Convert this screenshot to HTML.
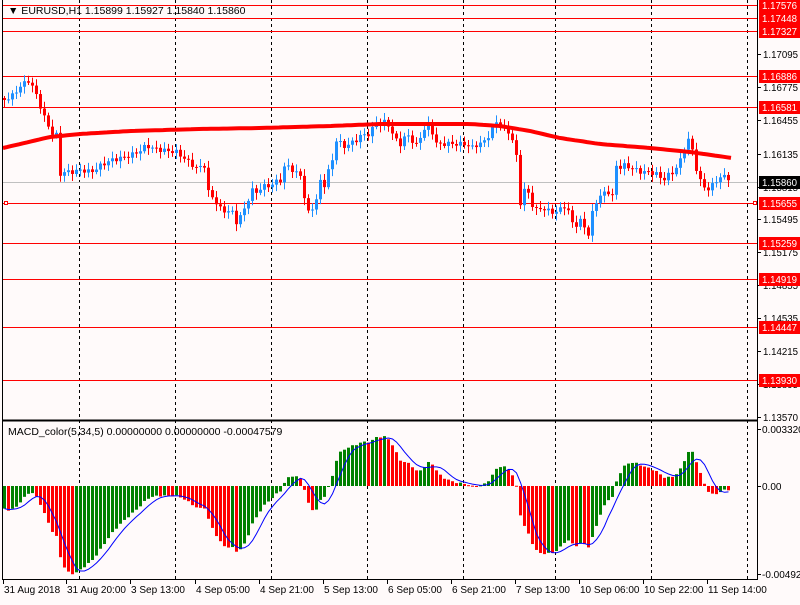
<!DOCTYPE html>
<html><head><meta charset="utf-8">
<style>
html,body{margin:0;padding:0;background:#fffafa;}
body{width:800px;height:600px;overflow:hidden;font-family:"Liberation Sans",Tahoma,sans-serif;}
svg text{font-family:"Liberation Sans",sans-serif;font-size:10px;}
</style></head>
<body>
<svg id="c" width="800" height="600" xmlns="http://www.w3.org/2000/svg">
<rect width="800" height="600" fill="#fffafa"/>
<g id="grid"></g>
<g id="lines"></g>
<g id="candles"></g>
<g id="macd"></g>
<g id="frame">
<line x1="2.5" y1="0" x2="2.5" y2="580" stroke="#000"/>
<line x1="757.5" y1="0" x2="757.5" y2="580" stroke="#000"/>
<line x1="2" y1="420.5" x2="758" y2="420.5" stroke="#000" stroke-width="2"/>
<line x1="2" y1="579.5" x2="758" y2="579.5" stroke="#000"/>
</g>
<g id="axis"></g>
<text x="8" y="14" style="font-size:10.5px" fill="#000">▼ EURUSD,H1  1.15899 1.15927 1.15840 1.15860</text>
<text x="8" y="435" style="font-size:10.5px" fill="#000">MACD_color(5,34,5) 0.00000000 0.00000000 -0.00047579</text>
</svg>
<script>
var NS="http://www.w3.org/2000/svg";
function el(p,t,a,txt){var e=document.createElementNS(NS,t);for(var k in a)e.setAttribute(k,a[k]);if(txt!==undefined)e.textContent=txt;document.getElementById(p).appendChild(e);return e;}
[79,175,271,367,463,555,651,747].forEach(function(x){el("grid","line",{x1:x+.5,y1:0,x2:x+.5,y2:580,stroke:"#000","stroke-dasharray":"3,3"});});
var rl=[[5,"1.17576"],[18,"1.17448"],[31,"1.17327"],[76,"1.16886"],[107,"1.16581"],[203,"1.15655"],[243,"1.15259"],[279,"1.14919"],[327,"1.14447"],[380,"1.13930"]];
el("lines","line",{x1:3,y1:182.5,x2:757,y2:182.5,stroke:"#c0c0c0"});
rl.forEach(function(r){el("lines","line",{x1:3,y1:r[0]+.5,x2:757,y2:r[0]+.5,stroke:"#ff0000"});});
el("lines","rect",{x:4.5,y:201.5,width:3,height:3,fill:"#fff",stroke:"#f00"});
el("lines","rect",{x:753.5,y:201.5,width:3,height:3,fill:"#fff",stroke:"#f00"});
var tk=[[54,"1.17095"],[87,"1.16775"],[120,"1.16455"],[154,"1.16135"],[187,"1.15815"],[219,"1.15495"],[252,"1.15175"],[285,"1.14855"],[318,"1.14535"],[351,"1.14215"],[384,"1.13895"],[417,"1.13570"]];
tk.forEach(function(t){el("axis","line",{x1:757,y1:t[0]+.5,x2:761,y2:t[0]+.5,stroke:"#000"});el("axis","text",{x:763,y:t[0]+4,fill:"#000",textLength:35,lengthAdjust:"spacingAndGlyphs"},t[1]);});
rl.forEach(function(r){el("axis","rect",{x:759,y:r[0]-6,width:41,height:13,fill:"#ff0000"});el("axis","text",{x:762,y:r[0]+4,fill:"#fff",textLength:35,lengthAdjust:"spacingAndGlyphs"},r[1]);});
el("axis","rect",{x:759,y:176,width:41,height:13,fill:"#000"});el("axis","text",{x:762,y:186,fill:"#fff",textLength:35,lengthAdjust:"spacingAndGlyphs"},"1.15860");
[[429,"0.003320"],[486,"0.00"],[574,"-0.004924"]].forEach(function(t){el("axis","line",{x1:757,y1:t[0]+.5,x2:761,y2:t[0]+.5,stroke:"#000"});el("axis","text",{x:762,y:t[0]+4,fill:"#000"},t[1]);});
var tl=[[3,"31 Aug 2018"],[66,"31 Aug 20:00"],[130,"3 Sep 13:00"],[195,"4 Sep 05:00"],[259,"4 Sep 21:00"],[323,"5 Sep 13:00"],[387,"6 Sep 05:00"],[451,"6 Sep 21:00"],[515,"7 Sep 13:00"],[579,"10 Sep 06:00"],[643,"10 Sep 22:00"],[707,"11 Sep 14:00"]];
tl.forEach(function(t){el("axis","line",{x1:t[0]+.5,y1:580,x2:t[0]+.5,y2:584,stroke:"#000"});el("axis","text",{x:t[0]+1,y:593,fill:"#000"},t[1]);});
var P=[[3,100],[12,95],[20,85],[28,80],[35,95],[42,115],[50,133],[55,135],[58,175],[62,172],[70,172],[80,170],[90,172],[100,165],[110,160],[120,158],[130,155],[140,150],[145,145],[150,148],[160,150],[175,152],[185,160],[195,168],[205,165],[207,192],[212,198],[218,208],[225,212],[230,210],[235,222],[240,215],[245,205],[250,190],[255,192],[260,188],[265,185],[270,186],[275,181],[280,180],[283,168],[288,165],[292,172],[296,174],[300,175],[304,205],[308,215],[312,205],[315,200],[318,178],[322,190],[325,175],[330,165],[335,140],[338,142],[342,147],[346,145],[350,143],[355,140],[360,135],[365,135],[370,133],[372,125],[375,122],[380,125],[385,120],[390,132],[395,140],[400,145],[405,133],[410,140],[415,145],[420,135],[425,125],[428,125],[432,135],[435,143],[440,145],[445,143],[450,144],[465,144],[470,148],[475,145],[480,143],[485,140],[490,130],[495,122],[500,125],[505,130],[510,135],[513,150],[516,160],[519,203],[522,190],[525,190],[528,195],[531,205],[535,210],[540,208],[550,212],[555,212],[560,208],[565,205],[568,215],[572,225],[575,225],[580,220],[588,237],[592,205],[596,200],[600,195],[604,192],[608,192],[612,198],[614,165],[618,168],[622,165],[630,168],[640,172],[648,172],[655,174],[662,180],[667,175],[672,172],[677,165],[681,155],[685,140],[689,140],[693,160],[697,178],[702,186],[708,190],[713,182],[718,178],[724,176],[730,180]];
function interp(A,x){for(var i=1;i<A.length;i++){if(x<=A[i][0]){var a=A[i-1],b=A[i];return a[1]+(b[1]-a[1])*(x-a[0])/(b[0]-a[0]);}}return A[A.length-1][1];}
var N=182,closes=[],xs=[];
var prev=98;
for(var i=0;i<N;i++){var x=3+4*i;xs.push(x);var c=interp(P,x)+Math.sin(i*2.3)*2.2;
 var o=prev;var hi=Math.min(o,c)-2-Math.abs(Math.sin(i*1.7))*5;var lo=Math.max(o,c)+2+Math.abs(Math.cos(i*1.3))*5;
 var up=c<o;var col=up?"#1e90ff":"#ff0000";
 el("candles","line",{x1:x+1.5,y1:hi,x2:x+1.5,y2:lo,stroke:col});
 var t=Math.min(o,c),h=Math.max(1,Math.abs(o-c));
 el("candles","rect",{x:x,y:t,width:3,height:h,fill:col});
 closes.push(c);prev=c;}
var MA=[[3,148],[50,137],[80,134],[130,131],[200,129],[260,128],[330,126],[380,124],[470,124],[500,126],[530,131],[560,138],[600,144],[650,148],[690,152],[732,158]];
var d="";for(var x=3;x<=732;x+=4){d+=(x==3?"M":"L")+x+","+interp(MA,x).toFixed(1);}
el("candles","path",{d:d,fill:"none",stroke:"#ff0000","stroke-width":4});
var pre=[];for(var k=0;k<60;k++)pre.push(k<45?70:70+(k-45)*1.5);
var all=pre.concat(closes);
var ef=all[0],es=all[0],a5=2/6,a34=2/35,m=[];
for(var i=0;i<all.length;i++){ef=ef+a5*(all[i]-ef);es=es+a34*(all[i]-es);m.push(-(ef-es)*1.66);}
m=m.slice(60);
var sd="";
for(var i=0;i<N;i++){var v=m[i];var col=(i==0||v>=m[i-1])?"#008000":"#ff0000";
 var y0=486,y1=486-v;el("macd","rect",{x:xs[i],y:Math.min(y0,y1),width:3,height:Math.max(1,Math.abs(v)),fill:col});
 var s=0,n=0;for(var j=Math.max(0,i-4);j<=i;j++){s+=m[j];n++;}
 sd+=(i==0?"M":"L")+(xs[i]+1.5)+","+(486-s/n).toFixed(1);}
el("macd","path",{d:sd,fill:"none",stroke:"#0000ff","stroke-width":1});
</script>
</body></html>
